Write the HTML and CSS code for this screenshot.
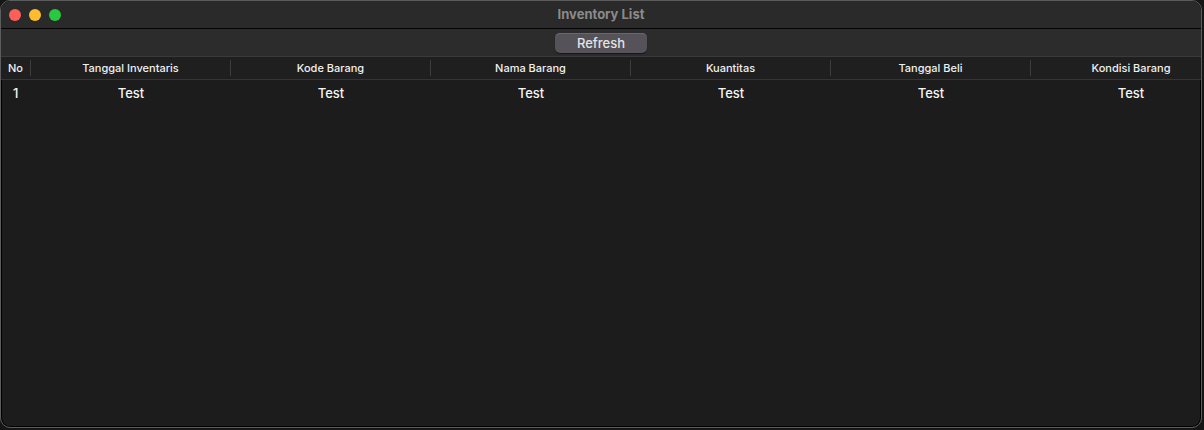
FILE: index.html
```html
<!DOCTYPE html>
<html>
<head>
<meta charset="utf-8">
<link rel="stylesheet" href="styles.css">
</head>
<body>
<div class="window">
  <div class="titlebar">
    <div class="lights">
      <span class="light red"></span>
      <span class="light yellow"></span>
      <span class="light green"></span>
    </div>
    <div class="title">Inventory List</div>
  </div>
  <div class="toolbar">
    <button class="btn">Refresh</button>
  </div>
  <div class="table">
    <div class="row head">
      <div class="cell no">No</div>
      <div class="cell">Tanggal Inventaris</div>
      <div class="cell">Kode Barang</div>
      <div class="cell">Nama Barang</div>
      <div class="cell">Kuantitas</div>
      <div class="cell">Tanggal Beli</div>
      <div class="cell">Kondisi Barang</div>
    </div>
    <div class="row data">
      <div class="cell no">1</div>
      <div class="cell">Test</div>
      <div class="cell">Test</div>
      <div class="cell">Test</div>
      <div class="cell">Test</div>
      <div class="cell">Test</div>
      <div class="cell">Test</div>
    </div>
  </div>
</div>
</body>
</html>
```

FILE: styles.css
```css
* { box-sizing: border-box; }
html, body {
  margin: 0;
  padding: 0;
  background: #151515;
  width: 1204px;
  height: 430px;
  overflow: hidden;
  font-family: Inter, "Noto Sans", "Liberation Sans", sans-serif;
}
.window {
  width: 1202px;
  height: 428px;
  border: 1px solid #5c5c5c;
  border-radius: 10px;
  overflow: hidden;
  background: #1c1c1c;
  box-shadow: inset 0 0 0 1px #000;
  display: flex;
  flex-direction: column;
}
.titlebar {
  height: 28px;
  flex: none;
  background: #2a2a2a;
  border-bottom: 1px solid #050505;
  display: flex;
  align-items: center;
  position: relative;
}
.lights {
  display: flex;
  gap: 8px;
  padding-left: 8px;
  padding-top: 1px;
}
.light {
  width: 12px;
  height: 12px;
  border-radius: 50%;
  display: block;
}
.red { background: #fe5f57; }
.yellow { background: #febc2e; }
.green { background: #28c840; }
.title {
  position: absolute;
  left: 0;
  right: 0;
  top: 0;
  height: 26px;
  line-height: 26px;
  text-align: center;
  color: #8b8b8b;
  font-size: 13px;
  font-weight: 700;
  pointer-events: none;
}
.toolbar {
  height: 28px;
  flex: none;
  background: #2c2c2c;
  display: flex;
  justify-content: center;
  align-items: flex-start;
  padding-top: 4px;
  border-bottom: 1px solid #3a3a3a;
}
.btn {
  width: 92px;
  height: 20px;
  border: none;
  border-radius: 5px;
  background: #555359;
  box-shadow: inset 0 1px 0 #6a686e, 0 1px 1px rgba(0,0,0,0.5);
  color: #e4e4e4;
  font-family: inherit;
  font-size: 13px;
  font-weight: 500;
  padding: 0;
  line-height: 19px;
}
.table {
  flex: 1;
  overflow: hidden;
}
.row {
  display: grid;
  grid-template-columns: 30px repeat(6, 200px);
  width: 1230px;
}
.head {
  height: 23px;
  background: #1f1f1f;
  border-bottom: 1px solid #353535;
  align-items: center;
}
.head .cell {
  font-size: 11px;
  font-weight: 500;
  color: #f0f0f0;
  text-align: center;
  height: 16px;
  line-height: 16px;
  border-right: 1px solid #3c3c3c;
}
.head .cell:last-child { border-right: none; }
.head .no { text-align: left; padding-left: 7px; }
.data {
  height: 26px;
  align-items: center;
}
.data .cell {
  font-size: 13px;
  font-weight: 500;
  color: #f4f4f4;
  text-align: center;
}
.data .no { text-align: left; padding-left: 12px; }
```
